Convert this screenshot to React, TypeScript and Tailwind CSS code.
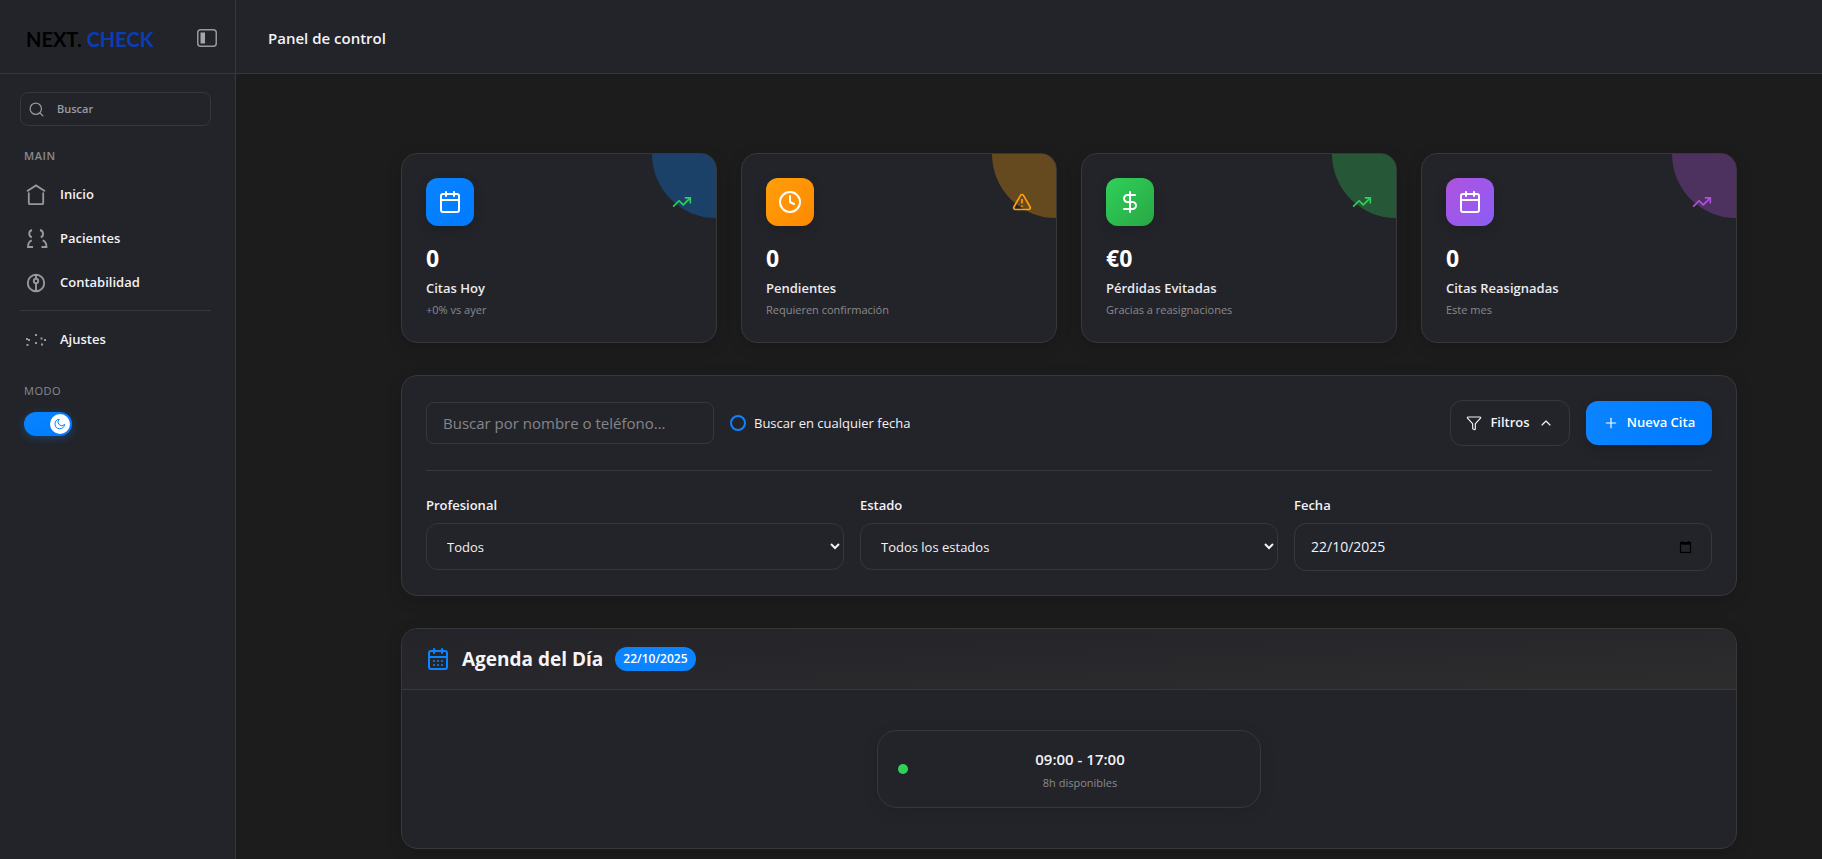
import { ReactNode } from 'react';
import { Calendar, CalendarDays, ChevronUp, Clock, DollarSign, Funnel, Plus, Search, TrendingUp, TriangleAlert } from 'lucide-react';

function PanelIcon() {
  return (
    <svg width="20" height="18" viewBox="0 0 20 18" fill="none">
      <rect x="0.75" y="0.75" width="18.5" height="16.5" rx="3" stroke="#98989d" strokeWidth="1.5" />
      <rect x="3.5" y="3.5" width="4.5" height="11" fill="#a5a5aa" />
    </svg>
  );
}

function HomeIcon() {
  return (
    <svg width="24" height="24" viewBox="0 0 24 24" fill="none" stroke="currentColor" strokeWidth="1.8">
      <path d="M3 8.2 12 2.4l9 5.8" />
      <path d="M4.8 9.6v10.7c0 .5.3.8.8.8h12.8c.5 0 .8-.3.8-.8V9.6" />
    </svg>
  );
}

function PatientsIcon() {
  return (
    <svg width="24" height="24" viewBox="0 0 24 24" fill="none" stroke="currentColor" strokeWidth="1.9">
      <path d="M8 3C4.6 4 4.2 8.8 7.8 10.3" />
      <path d="M16 3c3.8 1 4 6 .8 7.3" />
      <path d="M7.8 13.3c-2.600 1-3.800 3.400-3.800 6.700h5" />
      <path d="M18.7 13.3c2.600 1 3.800 3.400 3.800 6.700h-5" />
    </svg>
  );
}

function AccountingIcon() {
  return (
    <svg width="24" height="24" viewBox="0 0 24 24" fill="none" stroke="currentColor" strokeWidth="1.9">
      <circle cx="12" cy="12" r="8.2" />
      <circle cx="12" cy="10" r="2.2" />
      <path d="M12 4v4M12 12.200V20" />
    </svg>
  );
}

function SettingsIcon() {
  return (
    <svg width="24" height="24" viewBox="0 0 24 24" fill="currentColor">
      <rect x="2" y="10" width="2" height="2" />
      <rect x="4" y="11" width="2" height="2" />
      <rect x="2.5" y="16" width="2" height="2" />
      <rect x="11" y="6" width="2" height="2" />
      <rect x="11" y="14" width="2" height="2" />
      <rect x="16.5" y="9.5" width="2" height="2" />
      <rect x="20" y="11" width="2" height="2" />
      <rect x="17" y="15.5" width="2" height="2" />
    </svg>
  );
}

function MoonIcon() {
  return (
    <svg width="12" height="12" viewBox="0 0 24 24" fill="none" stroke="#0a84ff" strokeWidth="2" strokeLinecap="round" strokeLinejoin="round">
      <path d="M21 13.500A9.500 9.500 0 1 1 10.500 2.500a7.500 7.500 0 0 0 10.500 11z" />
    </svg>
  );
}

function DatePickerIcon() {
  return (
    <svg width="14" height="14" viewBox="0 0 14 14" fill="none" stroke="#000000">
      <rect x="1.5" y="2.5" width="10" height="10" strokeWidth="1.2" />
      <path d="M1 3.500h11" strokeWidth="2.4" />
      <path d="M3.500 1v1.500M9.500 1v1.500" strokeWidth="1.2" />
    </svg>
  );
}

function NavItem({ icon, label }: { icon: ReactNode; label: string }) {
  return (
    <a href="#" className="flex h-11 items-center gap-3 px-1 text-[13px] font-semibold text-[#f2f2f7]">
      <span className="text-[#98989d]">{icon}</span>
      {label}
    </a>
  );
}

function Sidebar() {
  return (
    <aside className="flex w-[236px] shrink-0 flex-col border-r border-[#38383a] bg-[#232429]">
      <div className="flex h-[74px] items-center justify-between border-b border-[#38383a] pt-[2px] pr-[18px] pl-[26px]">
        <a href="#" className="pt-[2px] font-['Lato',sans-serif] text-[20px] leading-6 font-bold text-black">
          NEXT. <span className="text-[#0a3db5]">CHECK</span>
        </a>
        <button type="button" aria-label="Contraer menú">
          <PanelIcon />
        </button>
      </div>
      <div className="flex flex-col px-5 pt-[18px]">
        <label className="flex h-[34px] w-[191px] items-center gap-3 rounded-lg border border-[#38383a] px-[7px]">
          <Search size={17} strokeWidth={1.75} className="shrink-0 text-[#98989d]" />
          <input
            type="search"
            aria-label="Buscar"
            placeholder="Buscar"
            className="w-full min-w-0 bg-transparent text-[11px] font-semibold outline-none placeholder:text-[#9a9ba5]"
          />
        </label>
        <h2 className="mt-[22px] px-1 text-[11px] leading-4 font-semibold tracking-wider text-[#8a8a8e]">MAIN</h2>
        <nav className="mt-[9px] w-[191px]">
          <NavItem icon={<HomeIcon />} label="Inicio" />
          <NavItem icon={<PatientsIcon />} label="Pacientes" />
          <NavItem icon={<AccountingIcon />} label="Contabilidad" />
          <hr className="mt-[5px] mb-[7px] border-[#38383a]" />
          <NavItem icon={<SettingsIcon />} label="Ajustes" />
        </nav>
        <h2 className="mt-[21px] px-1 text-[11px] leading-4 font-medium tracking-wider text-[#8a8a8e]">MODO</h2>
        <button
          type="button"
          role="switch"
          aria-checked="true"
          aria-label="Modo oscuro"
          className="mt-[13px] ml-1 flex h-6 w-12 items-center justify-end rounded-full bg-linear-to-br from-[#0a84ff] to-[#007aff] px-[2px] shadow-[0_2px_8px_rgba(10,132,255,0.3)]"
        >
          <span className="flex size-5 items-center justify-center rounded-full bg-white">
            <MoonIcon />
          </span>
        </button>
      </div>
    </aside>
  );
}

const stats = [
  {
    value: '0',
    label: 'Citas Hoy',
    note: '+0% vs ayer',
    icon: <Calendar size={24} />,
    trend: <TrendingUp size={20} />,
    tile: 'from-[#0a84ff] to-[#007aff]',
    corner: 'bg-[#0a84ff]/30',
    trendColor: 'text-[#30d158]',
  },
  {
    value: '0',
    label: 'Pendientes',
    note: 'Requieren confirmación',
    icon: <Clock size={24} />,
    trend: <TriangleAlert size={20} />,
    tile: 'from-[#ff9f0a] to-[#ff8800]',
    corner: 'bg-[#ff9f0a]/30',
    trendColor: 'text-[#ff9f0a]',
  },
  {
    value: '€0',
    label: 'Pérdidas Evitadas',
    note: 'Gracias a reasignaciones',
    icon: <DollarSign size={24} />,
    trend: <TrendingUp size={20} />,
    tile: 'from-[#30d158] to-[#28a745]',
    corner: 'bg-[#30d158]/30',
    trendColor: 'text-[#30d158]',
  },
  {
    value: '0',
    label: 'Citas Reasignadas',
    note: 'Este mes',
    icon: <Calendar size={24} />,
    trend: <TrendingUp size={20} />,
    tile: 'from-[#af52de] to-[#8b5cf6]',
    corner: 'bg-[#af52de]/30',
    trendColor: 'text-[#af52de]',
  },
];

function StatCard({ stat }: { stat: (typeof stats)[number] }) {
  return (
    <article className="relative overflow-hidden rounded-2xl border border-[#38383a] bg-[#232429] p-6 shadow-[0_4px_16px_rgba(0,0,0,0.15)]">
      <div className={`absolute top-0 right-0 size-16 rounded-bl-full ${stat.corner}`} />
      <div className="relative flex items-center justify-between">
        <div className={`flex size-12 items-center justify-center rounded-xl bg-linear-to-br text-white shadow-[0_4px_12px_rgba(0,0,0,0.15)] ${stat.tile}`}>
          {stat.icon}
        </div>
        <span className={stat.trendColor}>{stat.trend}</span>
      </div>
      <p className="mt-4 text-[23px] leading-8 font-bold text-white">{stat.value}</p>
      <p className="mt-1 text-[13px] leading-5 font-semibold text-[#ebebf0]">{stat.label}</p>
      <p className="mt-1 text-[11px] leading-4 text-[#8a8a8e]">{stat.note}</p>
    </article>
  );
}

function SelectField({ id, label, option }: { id: string; label: string; option: string }) {
  return (
    <div className="flex flex-col gap-2">
      <label htmlFor={id} className="text-[13px] leading-5 font-semibold text-[#f2f2f7]">
        {label}
      </label>
      <select id={id} className="h-[47px] rounded-xl border border-[#38383a] bg-[#232429] px-4 text-[13px] text-[#f2f2f7]">
        <option>{option}</option>
      </select>
    </div>
  );
}

function Filters() {
  return (
    <section className="rounded-2xl border border-[#38383a] bg-[#232429] p-6 shadow-[0_4px_16px_rgba(0,0,0,0.15)]">
      <div className="flex items-center justify-between">
        <div className="flex items-center gap-4">
          <input
            type="text"
            aria-label="Buscar por nombre o teléfono"
            placeholder="Buscar por nombre o teléfono..."
            className="h-[42px] w-72 rounded-lg border border-[#38383a] bg-transparent px-4 text-[15px] text-[#f2f2f7] outline-none placeholder:text-[#85858a]"
          />
          <label className="flex items-center gap-2 text-[13px] leading-5 text-[#f2f2f7]">
            <input type="checkbox" className="size-4 appearance-none rounded-full border-2 border-[#0a84ff] checked:bg-[#0a84ff]" />
            Buscar en cualquier fecha
          </label>
        </div>
        <div className="flex items-center gap-4">
          <button type="button" className="flex h-[46px] w-[120px] items-center justify-center gap-2 rounded-xl border border-[#38383a] text-[13px] font-semibold text-[#f2f2f7]">
            <Funnel size={16} strokeWidth={1.75} />
            Filtros
            <ChevronUp size={16} strokeWidth={1.75} />
          </button>
          <button
            type="button"
            className="flex h-11 w-[126px] items-center justify-center gap-2 rounded-xl bg-linear-to-r from-[#0a84ff] to-[#007aff] text-[13px] font-semibold text-white shadow-[0_4px_12px_rgba(0,0,0,0.15)]"
          >
            <Plus size={16} strokeWidth={1.75} />
            Nueva Cita
          </button>
        </div>
      </div>
      <div className="mt-6 grid grid-cols-3 gap-4 border-t border-[#38383a] pt-6">
        <SelectField id="profesional" label="Profesional" option="Todos" />
        <SelectField id="estado" label="Estado" option="Todos los estados" />
        <div className="flex flex-col gap-2">
          <label htmlFor="fecha" className="text-[13px] leading-5 font-semibold text-[#f2f2f7]">
            Fecha
          </label>
          <div className="flex h-12 items-center rounded-xl border border-[#38383a] pr-[18px] pl-4">
            <input
              id="fecha"
              type="text"
              inputMode="numeric"
              defaultValue="22/10/2025"
              className="min-w-0 flex-1 bg-transparent text-[14px] leading-5 text-[#f2f2f7] outline-none"
            />
            <button type="button" aria-label="Abrir calendario">
              <DatePickerIcon />
            </button>
          </div>
        </div>
      </div>
    </section>
  );
}

function Agenda() {
  return (
    <section className="overflow-hidden rounded-2xl border border-[#38383a] bg-[#232429] shadow-[0_4px_16px_rgba(0,0,0,0.15)]">
      <header className="flex items-center gap-3 border-b border-[#38383a] bg-linear-to-br from-[#232429] via-[#28272b] to-[#2d2d2d] px-6 py-4">
        <CalendarDays size={24} className="text-[#0a84ff]" />
        <h2 className="text-[19px] leading-7 font-bold text-[#f5f5f7]">Agenda del Día</h2>
        <span className="rounded-full bg-[#0a84ff] px-2 py-1 text-[12px] leading-4 font-semibold text-white">22/10/2025</span>
      </header>
      <div className="flex justify-center p-10">
        <div className="flex w-96 items-center gap-3 rounded-[20px] border border-[#38383a] px-5 py-4 shadow-[0_4px_16px_rgba(0,0,0,0.1)]">
          <span className="size-[10px] rounded-full bg-[#30d158]" />
          <div className="flex-1 text-center">
            <p className="text-[15px] leading-6 font-semibold text-[#f2f2f7]">09:00 - 17:00</p>
            <p className="mt-1 text-[11px] leading-4 text-[#8a8a8e]">8h disponibles</p>
          </div>
        </div>
      </div>
    </section>
  );
}

export default function App() {
  return (
    <div className="flex min-h-screen bg-[#1c1c1d] font-['Open_Sans','Noto_Sans',sans-serif] text-[#f2f2f7]">
      <Sidebar />
      <div className="flex min-w-0 flex-1 flex-col">
        <header className="flex h-[74px] items-center border-b border-[#38383a] bg-[#232429] px-8 pt-[2px]">
          <h1 className="text-[15px] leading-6 font-semibold text-[#f2f2f7]">Panel de control</h1>
        </header>
        <main className="pt-[79px] pb-[10px] pl-20">
          <div className="mx-auto flex max-w-[1400px] flex-col gap-8 px-8">
            <div className="grid grid-cols-4 gap-6">
              {stats.map((stat) => (
                <StatCard key={stat.label} stat={stat} />
              ))}
            </div>
            <Filters />
            <Agenda />
          </div>
        </main>
      </div>
    </div>
  );
}
